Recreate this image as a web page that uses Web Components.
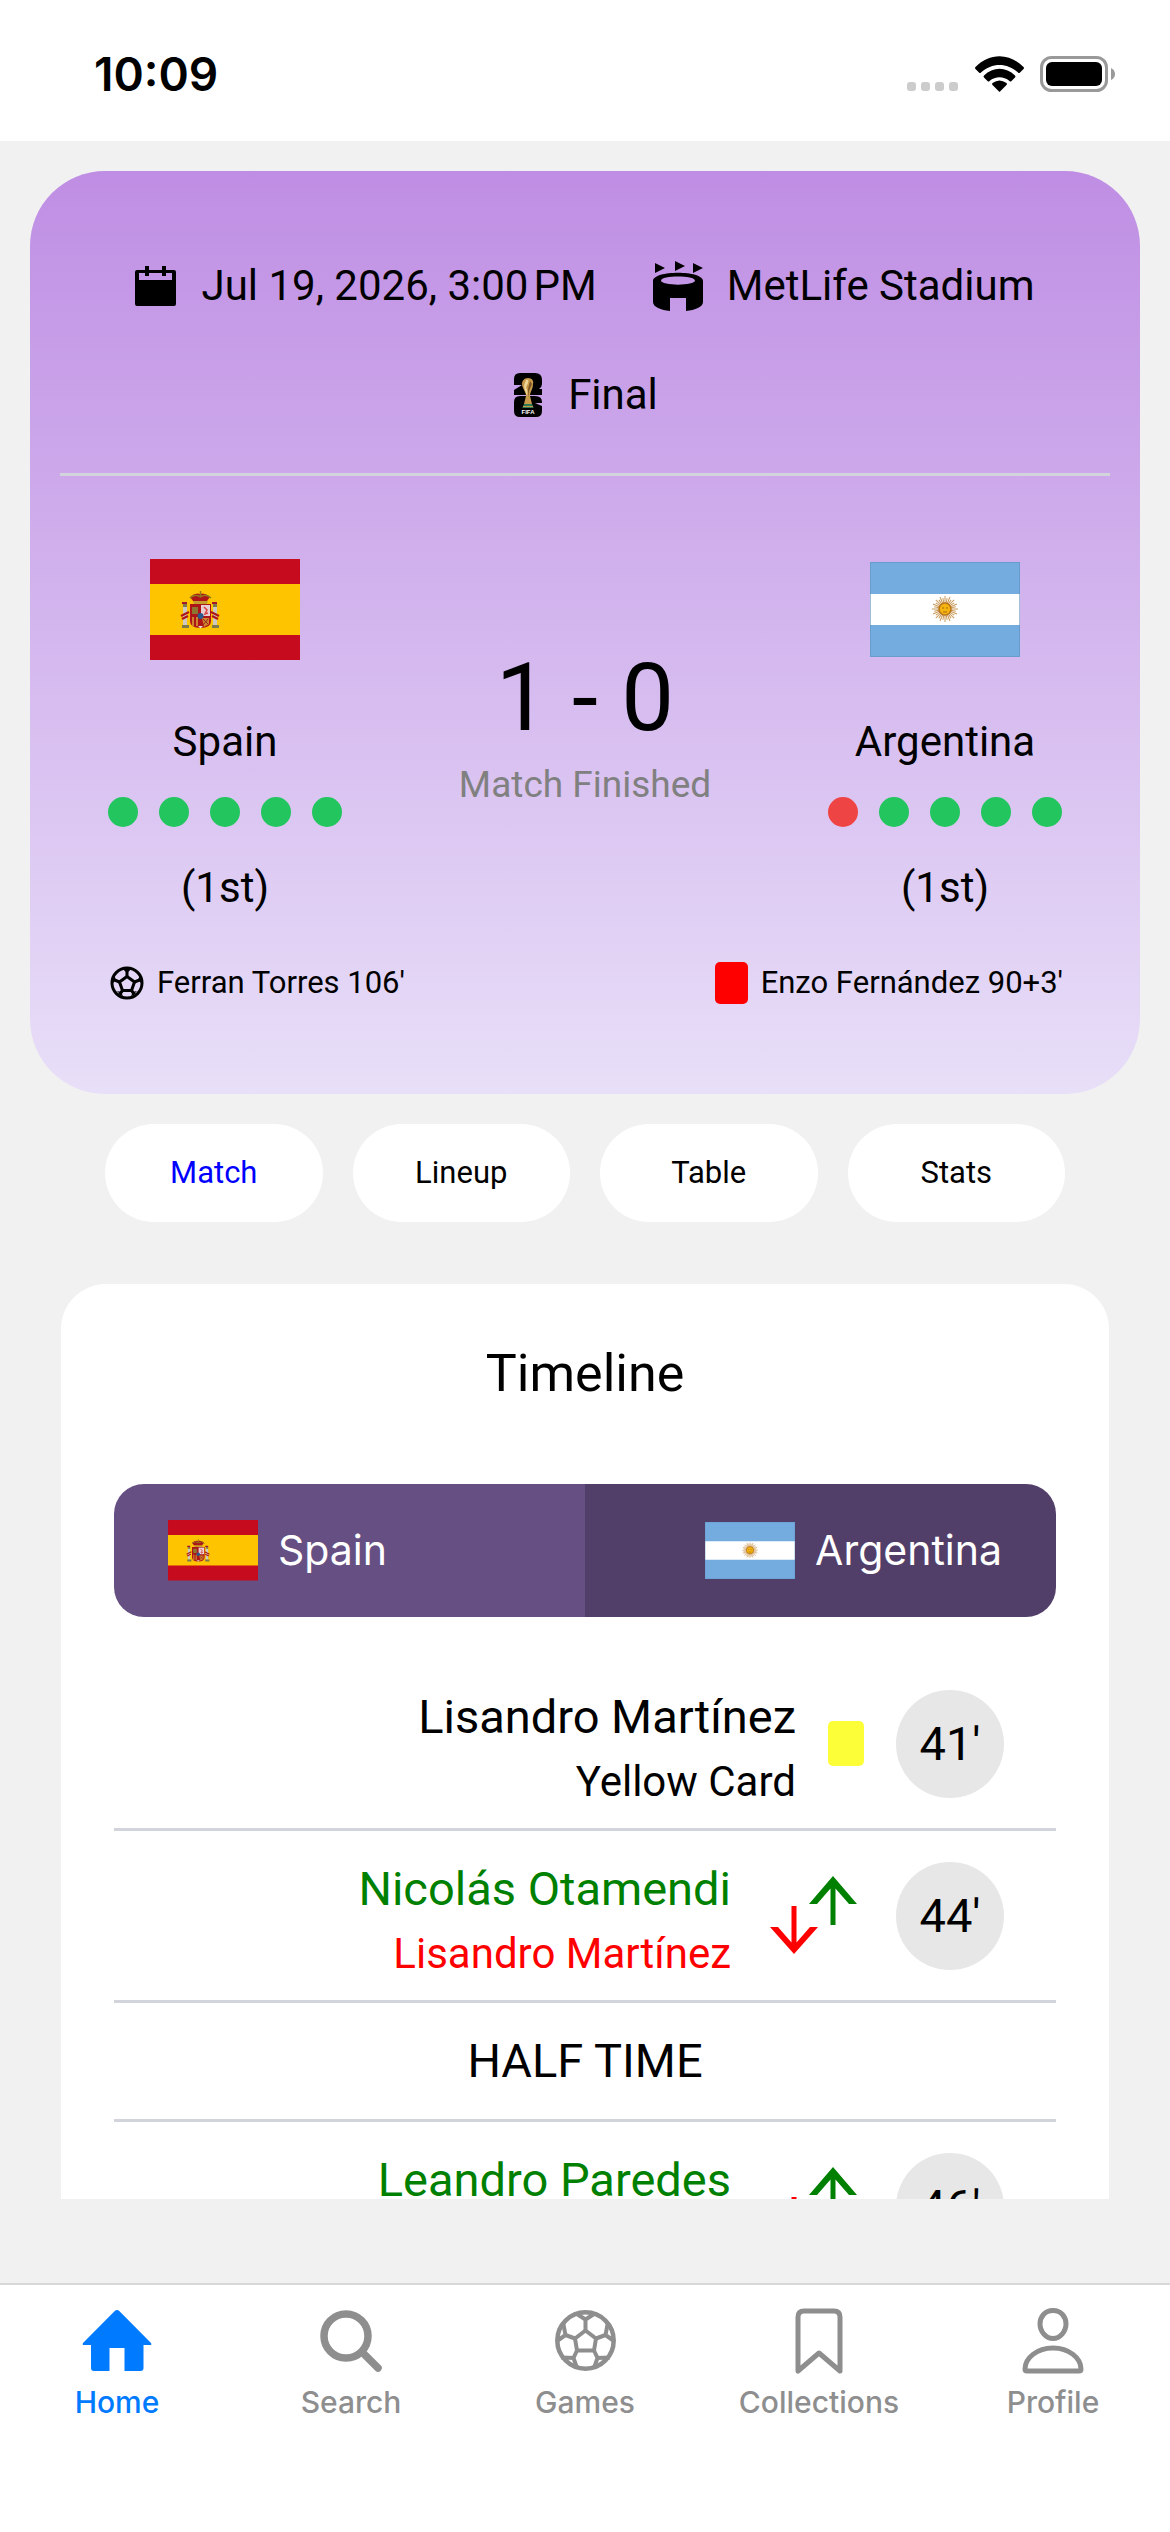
<!DOCTYPE html>
<html lang="en">
<head>
<meta charset="utf-8">
<meta name="viewport" content="width=device-width, initial-scale=1">
<title>Spain - Argentina</title>
<style>
    body {
        margin: 0;
        background: #f1f1f1;
        color: #000;
        font-family: Roboto, "Liberation Sans", sans-serif;
    }
</style>
</head>
<body>

<app-shell>
    <status-bar slot="top" time="10:09"></status-bar>

    <match-card home-score="1" away-score="0" status="Match Finished">
        <info-item slot="info" icon="calendar">Jul 19, 2026, 3:00&#8239;PM</info-item>
        <info-item slot="info" icon="stadium">MetLife Stadium</info-item>
        <info-item slot="info" icon="trophy">Final</info-item>
        <team-panel slot="home" flag="spain" form="WWWWW" rank="(1st)">Spain</team-panel>
        <team-panel slot="away" flag="argentina" form="LWWWW" rank="(1st)">Argentina</team-panel>
        <key-event slot="home-events" type="goal">Ferran Torres 106'</key-event>
        <key-event slot="away-events" type="red">Enzo Fernández 90+3'</key-event>
    </match-card>

    <section-tabs>
        <section-tab active>Match</section-tab>
        <section-tab>Lineup</section-tab>
        <section-tab>Table</section-tab>
        <section-tab>Stats</section-tab>
    </section-tabs>

    <match-timeline heading="Timeline">
        <timeline-team slot="teams" flag="spain">Spain</timeline-team>
        <timeline-team slot="teams" flag="argentina" away>Argentina</timeline-team>
        <timeline-event type="yellow" minute="41'">
            <span>Lisandro Martínez</span>
            <span slot="detail">Yellow Card</span>
        </timeline-event>
        <timeline-event type="sub" minute="44'">
            <span>Nicolás Otamendi</span>
            <span slot="detail">Lisandro Martínez</span>
        </timeline-event>
        <timeline-break>HALF TIME</timeline-break>
        <timeline-event type="sub" minute="46'">
            <span>Leandro Paredes</span>
        </timeline-event>
    </match-timeline>

    <nav-bar slot="bottom">
        <nav-item icon="home" href="#home" active>Home</nav-item>
        <nav-item icon="search" href="#search">Search</nav-item>
        <nav-item icon="ball" href="#games">Games</nav-item>
        <nav-item icon="bookmark" href="#collections">Collections</nav-item>
        <nav-item icon="person" href="#profile">Profile</nav-item>
    </nav-bar>
</app-shell>

<script>
const icons = {
    calendar: `
        <svg width="42" height="42" viewBox="0 0 42 42" aria-hidden="true">
            <path fill-rule="evenodd" d="M2 5h8V1h4v4h13V1h4v4h8q2 0 2 2v32q0 2-2 2H2q-2 0-2-2V7q0-2 2-2zM4 8v7h33V8h-6v3h-4V8H14v3h-4V8z"/>
        </svg>`,
    stadium: `
        <svg width="50" height="50" viewBox="0 0 50 50" aria-hidden="true">
            <path d="M2 2l10 5-10 5zM22 0l10 5-10 5zM40 2l10 5-10 5z"/>
            <path fill-rule="evenodd" d="M0 20C0 9 50 9 50 20V41c0 5-8 8-17 9V37H17v13C8 49 0 46 0 41zM8 19.500C8 25 42 25 42 19.500S8 14 8 19.500z"/>
        </svg>`,
    trophy: `
        <svg width="32" height="48" viewBox="0 0 32 48" aria-hidden="true">
            <path d="M8 2h15q7 0 7 7v4q0 3-3 5h3v6H2v-5l8-5H2V8q0-6 6-6z"/>
            <path d="M8 25h15q7 0 7 6v1h-7l7 3v5q0 6-6 6H8q-6 0-6-6V31q0-6 6-6z"/>
            <path fill="#c79a4b" d="M16 7c4 0 6 3 5 6 0 5-3 8-3 12l2 8h-8l2-8c0-4-4-8-4-12 0-3 2-6 6-6z"/>
            <path fill="#f0d69a" d="M14 9c2-1 3 1 2 3l-2 4c1 3 2 5 1 9-1-4-3-7-3-10z"/>
            <path fill="#7d5522" d="M18 10l2 3-3 7-1 7V18z"/>
            <path fill="#2b7a54" d="M12 33h8l1 2H11zM11 36h10l1 1H10z"/>
            <path fill="#c79a4b" d="M11 35h10v1H11z"/>
            <text x="16" y="43" text-anchor="middle" fill="#fff" font-family="Liberation Sans" font-weight="700" font-size="6">FIFA</text>
        </svg>`,
    goal: `
        <svg width="34" height="34" viewBox="0 0 34 34" fill="none" stroke="#000" aria-hidden="true">
            <circle cx="17" cy="17" r="15" stroke-width="3"/>
            <path stroke-width="3" stroke-linejoin="round" d="M17 10.500l7.500 5.500-3 8.500h-9l-3-8.500z"/>
            <path stroke-width="3" d="M17 10.500V6M24.500 16l5-2M21.500 24.500l3 4M12.500 24.500l-3 4M9.500 16l-5-2"/>
            <path fill="#000" stroke="none" d="M12 2h10l-5 5.500zM30 9l2 9-4-4zM4 9l-2 9 4-4zM27 25l-6 6 1.500-5zM7 25l6 6-1.500-5z"/>
        </svg>`,
    red: `
        <svg width="33" height="42" viewBox="0 0 33 42" aria-hidden="true">
            <rect width="33" height="42" rx="5" fill="#f00"/>
        </svg>`,
    yellow: `
        <svg width="36" height="45" viewBox="0 0 36 45" aria-hidden="true">
            <rect width="36" height="45" rx="5" fill="#fcff38"/>
        </svg>`,
    sub: `
        <svg width="101" height="108" viewBox="0 0 101 108" aria-hidden="true">
            <path fill="#008000" d="M70 14l24 28h-8L72.500 26.500V63h-5V26.500L54 42h-8z"/>
            <path fill="#f00" d="M31 92L7 65h8l13.500 15.500V44h5v36.500L47 65h8z"/>
        </svg>`,
    home: `
        <svg width="70" height="66" viewBox="0 0 70 66" fill="currentColor" aria-hidden="true">
            <path d="M32.500 3.200q2.500-2.400 5 0L69 35q1 2-1 2h-6.500v23q0 3-3 3H42.500V40h-15v23H12q-3 0-3-3V37H2q-2 0-1-2z"/>
        </svg>`,
    search: `
        <svg width="66" height="66" viewBox="0 0 66 66" fill="none" stroke="currentColor" aria-hidden="true">
            <circle cx="28" cy="28" r="22" stroke-width="7.500"/>
            <path d="M44 44l16 16" stroke-width="7.500" stroke-linecap="round"/>
        </svg>`,
    ball: `
        <svg width="61" height="66" viewBox="0 -2 61 66" fill="none" stroke="currentColor" aria-hidden="true">
            <circle cx="30.500" cy="30.500" r="28.200" stroke-width="4.500"/>
            <path stroke-width="4" stroke-linejoin="round" d="M30.500 20.500l10.500 8-2 12H22l-2-12z"/>
            <path stroke-width="4" d="M30.500 20.500V9.500M22 4l8.500 5.500L39 4M20 28.500L10.500 25M8 12l2.500 13L2 31M41 28.500l9.500-3.500M53 12l-2.500 13 8.500 6M22 40.500L18.500 48M6 47.500l12.500.5 3.500 10M39 40.500l3.500 7.500M55 47.500l-12.500.5L39 58"/>
        </svg>`,
    bookmark: `
        <svg width="48" height="66" viewBox="0 0 48 66" fill="none" stroke="currentColor" aria-hidden="true">
            <path stroke-width="5" stroke-linejoin="round" d="M3 63V9q0-6 6-6h30q6 0 6 6v54L24 45z"/>
        </svg>`,
    person: `
        <svg width="62" height="66" viewBox="0 0 62 66" fill="none" stroke="currentColor" aria-hidden="true">
            <path stroke-width="5" d="M31 2.500c8 0 13 6 13 13.500S38 30.500 31 30.500 18 23.500 18 16 23 2.500 31 2.500z"/>
            <path stroke-width="5" stroke-linejoin="round" d="M3 61C3 50 15 40 31 40s28 10 28 21q0 2-2 2H5q-2 0-2-2z"/>
        </svg>`
};

// sun rays, 32 alternating long and short ones
let rays = '';
for (let i = 0; i < 32; i++) {
    rays += `<path transform="rotate(${i * 11.25} 75 47)" d="M75 41V${i % 2 ? 36 : 34}"/>`;
}

const flags = {
    spain: `
        <svg viewBox="0 0 150 101" role="img" aria-label="Flag of Spain">
            <path fill="#c60b1e" d="M0 0h150v101H0z"/>
            <path fill="#ffc400" d="M0 25h150v51H0z"/>
            <path fill="#ccc9c0" d="M33 48h4v18h-4zM63 48h4v18h-4z"/>
            <path fill="#7c7a4b" d="M32 66h7v3h-7zM62 66h7v3h-7zM33 45h4v3h-4zM63 45h4v3h-4z"/>
            <path fill="#a3162b" d="M32 43h5v2h-5zM62 43h5v2h-5z"/>
            <path fill="none" stroke="#ad1519" stroke-width="2" d="M31 57l8-4M32 60l6-3M69 57l-8-4M68 60l-6-3"/>
            <path fill="#ad1519" d="M40 45h21v17q0 7-10.500 7T40 62z"/>
            <path fill="#8d7430" d="M42 48h6v7h-6z"/>
            <path fill="#e7cfd4" d="M51 46h9v11h-9z"/>
            <path fill="none" stroke="#db4446" stroke-width="1.500" d="M54 48l3 3-2 4 3-1"/>
            <path fill="#d0832d" d="M42 58h2v9h-2zM46 58h2v9h-2zM52 59h7v6l-5 3z"/>
            <path fill="none" stroke="#8f2b20" d="M53 60l5 5M58 60l-5 6"/>
            <circle cx="50.500" cy="57" r="3" fill="#2a5a8c"/>
            <path fill="#e3e0d5" d="M48 67h5l-2.500 2.500z"/>
            <path fill="#c3a02c" d="M43 42h15l-1 3H44z"/>
            <path fill="#ad1519" d="M40 38q5-5 10-3 5-2 10 3l-3 4H43z"/>
            <path fill="none" stroke="#8d7a20" stroke-width="1.500" d="M40 39q5-5 10.500-1 5.500-4 10.500 1M50.500 32v6"/>
        </svg>`,
    argentina: `
        <svg viewBox="0 0 150 95" role="img" aria-label="Flag of Argentina">
            <path fill="#74acdf" d="M0 0h150v95H0z"/>
            <path fill="#fff" d="M0 32h150v31H0z"/>
            <g fill="none" stroke="#c99a58" stroke-width="1">${rays}</g>
            <circle cx="75" cy="47" r="6" fill="#f6b40e" stroke="#b9741b" stroke-width="1.500"/>
            <path fill="none" stroke="#a86a16" d="M72 46h2M76 46h2M73 50h4"/>
            <path fill="none" stroke="#5f93c2" d="M.5.5h149v94H.5z" opacity=".6"/>
        </svg>`
};

// attaches an open shadow root holding the given styles and markup
function render(host, css, html) {
    const template = document.createElement('template');
    template.innerHTML = `<style>${css}</style>${html}`;
    host.attachShadow({mode: 'open'}).appendChild(template.content.cloneNode(true));
}

customElements.define('app-shell', class extends HTMLElement {
    constructor() {
        super();
        render(this, `
            :host {
                display: flex;
                flex-direction: column;
                height: 100vh;
            }
            main {
                display: flex;
                flex-direction: column;
                flex: 1;
                min-height: 0;
                padding: 30px 0 84px;
                box-sizing: border-box;
            }
        `, `
            <slot name="top"></slot>
            <main><slot></slot></main>
            <slot name="bottom"></slot>
        `);
    }
});

customElements.define('status-bar', class extends HTMLElement {
    constructor() {
        super();
        render(this, `
            :host {
                display: flex;
                align-items: center;
                justify-content: space-between;
                box-sizing: border-box;
                padding: 44px 54px 37px 94px;
                background: #fff;
                font-family: Inter, sans-serif;
                font-size: 46px;
                font-weight: 600;
                line-height: 60px;
            }
            div {
                display: flex;
                align-items: center;
                gap: 16px;
            }
        `, `
            <span>${this.getAttribute('time')}</span>
            <div>
                <svg width="52" height="36" viewBox="0 0 52 36" fill="#ccc" aria-hidden="true">
                    <rect x="0" y="26" width="9" height="9" rx="3"/>
                    <rect x="14" y="26" width="9" height="9" rx="3"/>
                    <rect x="28" y="26" width="9" height="9" rx="3"/>
                    <rect x="42" y="26" width="9" height="9" rx="3"/>
                </svg>
                <svg width="49" height="36" viewBox="0 0 49 36" role="img" aria-label="Wi-Fi">
                    <path d="M24.500 36l-7-7q-1-1 0-2 7-5 14 0 1 1 0 2z"/>
                    <path d="M9 19.500q-1 1 0 2l3.500 3.500q1 1 2 0c6-5 14-5 20 0q1 1 2 0l3.500-3.500q1-1 0-2c-9-9-22-9-31 0z"/>
                    <path d="M.5 11q-1 1 0 2l3.500 3.500q1 1 2 0c11-10 26-10 37 0q1 1 2 0l3.500-3.500q1-1 0-2c-14-14.500-34-14.500-48 0z"/>
                </svg>
                <svg width="76" height="36" viewBox="0 0 76 36" role="img" aria-label="Battery">
                    <rect x="1.500" y="1.500" width="65" height="33" rx="10" fill="none" stroke="#999" stroke-width="3"/>
                    <rect x="6" y="6" width="56" height="24" rx="6"/>
                    <path fill="#999" d="M71 12q4 2 4 6t-4 6z"/>
                </svg>
            </div>
        `);
    }
});

customElements.define('nation-flag', class extends HTMLElement {
    constructor() {
        super();
        render(this, `
            :host {
                display: block;
            }
            svg {
                display: block;
                width: 100%;
            }
        `, flags[this.getAttribute('name')]);
    }
});

customElements.define('info-item', class extends HTMLElement {
    constructor() {
        super();
        render(this, `
            :host {
                display: flex;
                align-items: center;
                gap: 24px;
                font-size: 42px;
                line-height: 48px;
            }
        `, `${icons[this.getAttribute('icon')]}<span><slot></slot></span>`);
    }
});

customElements.define('team-panel', class extends HTMLElement {
    constructor() {
        super();
        const dots = [...this.getAttribute('form')]
            .map(result => `<i class="${result === 'W' ? 'win' : 'loss'}"></i>`)
            .join('');
        render(this, `
            :host {
                display: flex;
                flex-direction: column;
                align-items: center;
            }
            .flag {
                display: flex;
                align-items: center;
                height: 102px;
            }
            nation-flag {
                width: 150px;
            }
            .name {
                margin-top: 58px;
                font-size: 42px;
                line-height: 48px;
            }
            .form {
                display: flex;
                gap: 21px;
                margin: 31px 0 33px;
            }
            i {
                width: 30px;
                height: 30px;
                border-radius: 50%;
            }
            .win {
                background: #22c55e;
            }
            .loss {
                background: #ef4444;
            }
            .rank {
                font-size: 42px;
                line-height: 56px;
            }
        `, `
            <div class="flag"><nation-flag name="${this.getAttribute('flag')}"></nation-flag></div>
            <div class="name"><slot></slot></div>
            <div class="form">${dots}</div>
            <div class="rank">${this.getAttribute('rank')}</div>
        `);
    }
});

customElements.define('key-event', class extends HTMLElement {
    constructor() {
        super();
        render(this, `
            :host {
                display: flex;
                align-items: center;
                gap: 13px;
                font-size: 31px;
                line-height: 42px;
            }
        `, `${icons[this.getAttribute('type')]}<span><slot></slot></span>`);
    }
});

customElements.define('match-card', class extends HTMLElement {
    constructor() {
        super();
        render(this, `
            :host {
                display: block;
                flex: none;
                margin: 0 30px;
                padding: 90px 15px;
                border-radius: 75px;
                background: linear-gradient(#bf8ee4, #e8dff8);
            }
            .info {
                display: flex;
                flex-wrap: wrap;
                justify-content: center;
                gap: 60px 56px;
            }
            hr {
                height: 3px;
                margin: 54px 15px 82px;
                border: 0;
                background: #d1d5db;
            }
            .teams {
                display: grid;
                grid-template-columns: 1fr 1fr 1fr;
                align-items: center;
            }
            .score {
                padding-bottom: 18px;
                text-align: center;
            }
            .result {
                font-size: 94px;
                line-height: 100px;
            }
            .status {
                margin-top: 13px;
                color: #808080;
                font-size: 37px;
                line-height: 48px;
            }
            .events {
                display: flex;
                justify-content: space-between;
                margin: 46px 62px 0 65px;
            }
        `, `
            <div class="info"><slot name="info"></slot></div>
            <hr>
            <div class="teams">
                <slot name="home"></slot>
                <div class="score">
                    <div class="result">${this.getAttribute('home-score')} - ${this.getAttribute('away-score')}</div>
                    <div class="status">${this.getAttribute('status')}</div>
                </div>
                <slot name="away"></slot>
            </div>
            <div class="events">
                <div><slot name="home-events"></slot></div>
                <div><slot name="away-events"></slot></div>
            </div>
        `);
    }
});

customElements.define('section-tab', class extends HTMLElement {
    constructor() {
        super();
        render(this, `
            :host {
                display: block;
                flex: 1;
            }
            button {
                width: 100%;
                padding: 29px 0;
                border: 0;
                border-radius: 50px;
                background: #fff;
                color: #000;
                font: inherit;
                font-size: 31px;
                line-height: 40px;
            }
            :host([active]) button {
                color: #00f;
            }
        `, `<button type="button"><slot></slot></button>`);

        this.addEventListener('click', () => {
            for (const tab of this.parentElement.children) {
                tab.toggleAttribute('active', tab === this);
            }
        });
    }
});

customElements.define('section-tabs', class extends HTMLElement {
    constructor() {
        super();
        render(this, `
            :host {
                display: flex;
                flex: none;
                gap: 30px;
                margin: 30px 105px 62px;
            }
        `, `<slot></slot>`);
    }
});

customElements.define('timeline-team', class extends HTMLElement {
    constructor() {
        super();
        render(this, `
            :host {
                display: flex;
                flex: 1;
                align-items: center;
                gap: 20px;
                padding: 36px 54px;
                background: #665083;
                color: #fff;
                font-family: Inter, sans-serif;
                font-size: 41px;
                line-height: 60px;
            }
            :host([away]) {
                justify-content: flex-end;
                background: #523f69;
            }
            nation-flag {
                width: 90px;
            }
        `, `
            <nation-flag name="${this.getAttribute('flag')}"></nation-flag>
            <span><slot></slot></span>
        `);
    }
});

customElements.define('timeline-event', class extends HTMLElement {
    constructor() {
        super();
        render(this, `
            :host {
                display: flex;
                align-items: center;
                justify-content: flex-end;
                gap: 32px;
                padding: 20px 52px 19px;
                border-bottom: 3px solid #d1d5db;
            }
            .text {
                text-align: right;
            }
            .player {
                font-size: 47px;
                line-height: 76px;
            }
            .detail {
                min-height: 54px;
                font-size: 42px;
                line-height: 54px;
            }
            :host([type="sub"]) .player {
                color: #008000;
            }
            :host([type="sub"]) .detail {
                color: #f00;
            }
            .minute {
                width: 108px;
                border-radius: 50%;
                background: #e7e7e7;
                font-size: 47px;
                line-height: 108px;
                text-align: center;
            }
        `, `
            <div class="text">
                <div class="player"><slot></slot></div>
                <div class="detail"><slot name="detail"></slot></div>
            </div>
            ${icons[this.getAttribute('type')]}
            <div class="minute">${this.getAttribute('minute')}</div>
        `);
    }
});

customElements.define('timeline-break', class extends HTMLElement {
    constructor() {
        super();
        render(this, `
            :host {
                display: block;
                padding: 28px 0;
                border-bottom: 3px solid #d1d5db;
                font-size: 47px;
                line-height: 60px;
                text-align: center;
            }
        `, `<slot></slot>`);
    }
});

customElements.define('match-timeline', class extends HTMLElement {
    constructor() {
        super();
        render(this, `
            :host {
                display: block;
                flex: 1;
                min-height: 0;
                margin: 0 61px;
                padding: 60px 53px 0;
                border-radius: 45px 45px 0 0;
                background: #fff;
                overflow: hidden;
            }
            h2 {
                margin: 0 0 80px;
                font-size: 52px;
                font-weight: inherit;
                line-height: 60px;
                text-align: center;
            }
            .teams {
                display: flex;
                margin-bottom: 42px;
                border-radius: 30px;
                overflow: hidden;
            }
        `, `
            <h2>${this.getAttribute('heading')}</h2>
            <div class="teams"><slot name="teams"></slot></div>
            <slot></slot>
        `);
    }
});

customElements.define('nav-item', class extends HTMLElement {
    constructor() {
        super();
        render(this, `
            :host {
                display: block;
                flex: 1 1 0;
            }
            a {
                display: flex;
                flex-direction: column;
                align-items: center;
                gap: 10px;
                color: #8e8e8f;
                text-decoration: none;
            }
            :host([active]) a {
                color: #007aff;
            }
        `, `
            <a href="${this.getAttribute('href')}">
                ${icons[this.getAttribute('icon')]}
                <span><slot></slot></span>
            </a>
        `);
    }
});

customElements.define('nav-bar', class extends HTMLElement {
    constructor() {
        super();
        render(this, `
            :host {
                display: block;
                border-top: 2px solid #d8d8d8;
                background: #fff;
                font-family: Inter, sans-serif;
                font-size: 30px;
                font-weight: 500;
                line-height: 36px;
            }
            nav {
                display: flex;
                padding: 23px 0 112px;
            }
        `, `<nav><slot></slot></nav>`);
    }
});
</script>
</body>
</html>
